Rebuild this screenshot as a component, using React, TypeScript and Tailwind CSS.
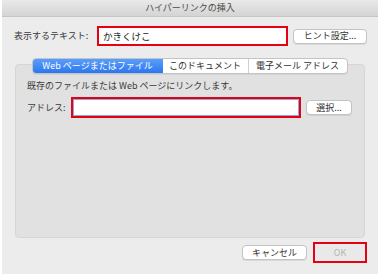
import React from 'react';

const font = { fontFamily: '"Noto Sans CJK JP", "Noto Sans", sans-serif' };

function MacButton({ label, className }: { label: string; className: string }) {
  return (
    <div
      className={`flex items-center justify-center bg-white border border-[#c3c3c3] rounded-[4px] shadow-[0_1px_0_rgba(0,0,0,0.08)] text-[9px] text-[#333] ${className}`}
    >
      {label}
    </div>
  );
}

export default function App() {
  return (
    <div className="w-[382px] h-[277px] bg-white" style={font}>
      <div className="ml-[2px] w-[376px] h-[274px] bg-[#ececec] flex flex-col">
        {/* Title bar */}
        <div className="h-[17px] flex items-center justify-center bg-gradient-to-b from-[#e9e9e9] to-[#d4d4d4] border-b border-[#c6c6c6] text-[9px] text-[#4a4a4a]">
          ハイパーリンクの挿入
        </div>

        {/* Display text row */}
        <div className="flex items-center mt-[9px] pl-[12px] h-[20px]">
          <span className="text-[9px] text-[#3a3a3a] w-[83px]">表示するテキスト:</span>
          <div className="w-[191px] h-[20px] border-2 border-[#e50012] bg-white flex items-center pl-[4px] text-[9.5px] text-[#222]">
            かきくけこ
          </div>
          <MacButton label="ヒント設定..." className="ml-[5px] w-[74px] h-[15px]" />
        </div>

        {/* Tabs */}
        <div className="relative z-10 flex justify-center mt-[12px] -mb-[10px] pr-[1px]">
          <div className="flex h-[16px] rounded-[4px] border border-[#c4c4c4] bg-white overflow-hidden text-[9px] shadow-[0_1px_0_rgba(0,0,0,0.06)]">
            <div className="w-[130px] flex items-center justify-center bg-gradient-to-b from-[#5b9ef8] to-[#2a76ef] text-white">
              Web ページまたはファイル
            </div>
            <div className="w-[86px] flex items-center justify-center text-[#333] border-r border-[#d0d0d0]">
              このドキュメント
            </div>
            <div className="w-[98px] flex items-center justify-center text-[#333]">
              電子メール アドレス
            </div>
          </div>
        </div>

        {/* Panel */}
        <div className="mx-[13px] h-[174px] rounded-[4px] bg-[#e1e1e1] border border-[#d6d6d6] pt-[15px] pl-[11px]">
          <div className="text-[9px] text-[#3a3a3a] leading-[12px]">
            既存のファイルまたは Web ページにリンクします。
          </div>
          <div className="flex items-center mt-[5px]">
            <span className="text-[9px] text-[#3a3a3a] w-[44px]">アドレス:</span>
            <div className="w-[230px] h-[21px] border-2 border-[#e50012] bg-white">
              <div className="w-full h-full border border-[#86a9e6]" />
            </div>
            <MacButton label="選択..." className="ml-[5px] w-[46px] h-[15px]" />
          </div>
        </div>

        {/* Bottom buttons */}
        <div className="flex justify-end items-center mt-[4px] pr-[11px] h-[21px]">
          <MacButton label="キャンセル" className="w-[65px] h-[15px]" />
          <div className="ml-[6px] w-[54px] h-[21px] border-2 border-[#e50012] flex items-center justify-center">
            <div className="w-[48px] h-[15px] rounded-[3px] bg-[#e9e9e9] flex items-center justify-center text-[9px] text-[#b5b5b5]">
              OK
            </div>
          </div>
        </div>
      </div>
    </div>
  );
}
